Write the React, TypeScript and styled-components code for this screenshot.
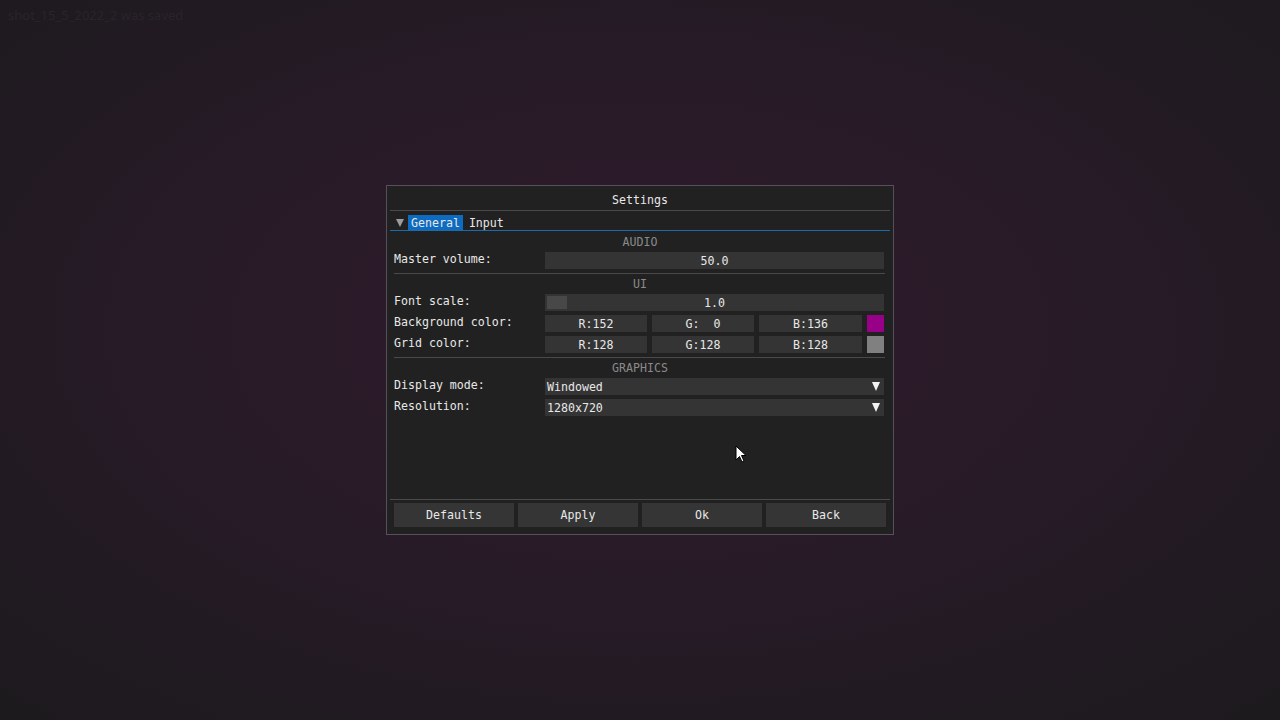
import React from "react";
import styled, { createGlobalStyle } from "styled-components";

const Global = createGlobalStyle`
  html, body { margin: 0; padding: 0; }
  body {
    width: 1280px; height: 720px; overflow: hidden;
    background: #1d1a1e;
    font-family: "DejaVu Sans Mono", "Liberation Mono", monospace;
  }
`;

const Page = styled.div`
  position: relative;
  width: 1280px;
  height: 720px;
  display: flex;
  align-items: center;
  justify-content: center;
  background: radial-gradient(ellipse 75% 75% at 50% 46%, #2f1c2d 0%, #2a1b29 35%, #221a23 70%, #1c1a1d 100%);
`;

const Toast = styled.div`
  position: absolute;
  top: 6px;
  left: 8px;
  font-family: "Noto Sans", sans-serif;
  font-size: 13px;
  color: #29242b;
`;

const Window = styled.div`
  box-sizing: border-box;
  width: 508px;
  height: 350px;
  border: 1px solid #56505a;
  background: #212121;
  display: flex;
  flex-direction: column;
  color: #e8e8e8;
  font-size: 11.6px;
  letter-spacing: 0;
`;

const TitleBar = styled.div`
  margin: 0 3px;
  height: 25px;
  box-sizing: border-box;
  border-bottom: 1px solid #4a4a4a;
  display: flex;
  align-items: center;
  justify-content: center;
  padding-top: 4px;
`;

const TabRow = styled.div`
  margin: 4px 3px 0;
  height: 16px;
  box-sizing: border-box;
  border-bottom: 1px solid #1f6aa8;
  display: flex;
  align-items: stretch;
  gap: 3px;
`;

const Arrow = styled.span`
  width: 0;
  height: 0;
  align-self: center;
  margin: 0 1px 0 6px;
  border-left: 4px solid transparent;
  border-right: 4px solid transparent;
  border-top: 8px solid #9c9c9c;
`;

const Tab = styled.span<{ $active?: boolean }>`
  display: flex;
  align-items: center;
  padding: 1px 3px 0;
  background: ${(p) => (p.$active ? "#0d6cc1" : "transparent")};
`;

const Content = styled.div`
  flex: 1;
  display: flex;
  flex-direction: column;
  padding: 1px 7px 0;
`;

const Header = styled.div`
  height: 20px;
  line-height: 20px;
  text-align: center;
  color: #8a8a8a;
`;

const Row = styled.div`
  display: grid;
  grid-template-columns: 151px 1fr;
  height: 17px;
  margin-bottom: 4px;
  padding-right: 2px;
`;

const Label = styled.div`
  line-height: 14px;
`;

const Frame = styled.div<{ $align?: string }>`
  position: relative;
  background: #343434;
  height: 17px;
  display: flex;
  align-items: center;
  justify-content: ${(p) => p.$align || "center"};
  padding: 0 2px;
  box-sizing: border-box;
`;

const Grab = styled.div`
  position: absolute;
  left: 2px;
  top: 2px;
  width: 20px;
  height: 13px;
  background: #484848;
`;

const Value = styled.span`
  position: relative;
`;

const ColorRow = styled.div`
  display: grid;
  grid-template-columns: 102px 102px 103px 17px;
  gap: 5px;
`;

const Swatch = styled.div<{ $c: string }>`
  height: 17px;
  background: ${(p) => p.$c};
`;

const ComboArrow = styled.span`
  position: absolute;
  right: 4px;
  top: 4px;
  width: 0;
  height: 0;
  border-left: 4.5px solid transparent;
  border-right: 4.5px solid transparent;
  border-top: 9px solid #f2f2f2;
`;

const Sep = styled.div`
  height: 1px;
  background: #4a4a4a;
  margin-right: 1px;
`;

const Spacer = styled.div`
  flex: 1;
`;

const Footer = styled.div`
  margin: 0 3px;
  border-top: 1px solid #4a4a4a;
  padding: 3px 3px 7px 4px;
  display: grid;
  grid-template-columns: repeat(4, 120px);
  gap: 4px;
`;

const Button = styled.div`
  height: 24px;
  background: #353535;
  display: flex;
  align-items: center;
  justify-content: center;
`;

const Cursor = styled.svg`
  position: absolute;
  left: 735px;
  top: 445px;
`;

const ColorPick = ({ r, g, b, c }: { r: string; g: string; b: string; c: string }) => (
  <ColorRow>
    <Frame><Value>R:{r}</Value></Frame>
    <Frame><Value>G:{g}</Value></Frame>
    <Frame><Value>B:{b}</Value></Frame>
    <Swatch $c={c} />
  </ColorRow>
);

export default function App() {
  return (
    <>
      <Global />
      <Page>
        <Toast>shot_15_5_2022_2 was saved</Toast>
        <Window>
          <TitleBar>Settings</TitleBar>
          <TabRow>
            <Arrow />
            <Tab $active>General</Tab>
            <Tab>Input</Tab>
          </TabRow>
          <Content>
            <Header>AUDIO</Header>
            <Row>
              <Label>Master volume:</Label>
              <Frame><Value>50.0</Value></Frame>
            </Row>
            <Sep />
            <Header>UI</Header>
            <Row>
              <Label>Font scale:</Label>
              <Frame><Grab /><Value>1.0</Value></Frame>
            </Row>
            <Row>
              <Label>Background color:</Label>
              <ColorPick r="152" g={"\u00a0\u00a00"} b="136" c="#980088" />
            </Row>
            <Row>
              <Label>Grid color:</Label>
              <ColorPick r="128" g="128" b="128" c="#808080" />
            </Row>
            <Sep />
            <Header>GRAPHICS</Header>
            <Row>
              <Label>Display mode:</Label>
              <Frame $align="flex-start"><Value>Windowed</Value><ComboArrow /></Frame>
            </Row>
            <Row>
              <Label>Resolution:</Label>
              <Frame $align="flex-start"><Value>1280x720</Value><ComboArrow /></Frame>
            </Row>
            <Spacer />
          </Content>
          <Footer>
            <Button>Defaults</Button>
            <Button>Apply</Button>
            <Button>Ok</Button>
            <Button>Back</Button>
          </Footer>
        </Window>
        <Cursor width="12" height="19" viewBox="0 0 12 19">
          <path d="M1 1 L1 15 L4.5 11.5 L7 17 L9 16 L6.5 10.5 L11 10.5 Z" fill="#ffffff" stroke="#000000" strokeWidth="1" />
        </Cursor>
      </Page>
    </>
  );
}
